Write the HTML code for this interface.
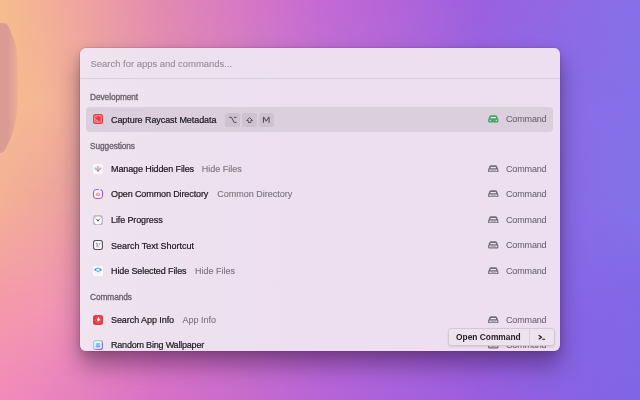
<!DOCTYPE html>
<html><head><meta charset="utf-8">
<style>
*{margin:0;padding:0;box-sizing:border-box}
html,body{width:640px;height:400px;overflow:hidden}
body{position:relative;font-family:"Liberation Sans",sans-serif;background:#c46ad4}
.bg{position:absolute;left:0;top:0;width:640px;height:400px}
.b400{background:linear-gradient(90deg,#f48bbb 0px,#e680c0 80px,#d870c8 160px,#c86ccc 240px,#b864d8 320px,#a862dc 400px,#9a5ee0 480px,#8a62e2 560px,#7e66e6 640px)}
.b300{background:linear-gradient(90deg,#f49aa8 0px,#f498b0 40px,#ea90b6 80px,#d878c4 160px,#b868d6 320px,#9862e0 480px,#8866e6 560px,#8268e6 640px);-webkit-mask-image:linear-gradient(180deg,#000 300px,transparent 400px)}
.b200{background:linear-gradient(90deg,#f4b196 0px,#f0a89a 40px,#e8a0a2 80px,#dc88b4 160px,#bc6cd4 320px,#9866e0 480px,#8a6ae6 560px,#8273e8 640px);-webkit-mask-image:linear-gradient(180deg,#000 200px,transparent 300px)}
.b100{background:linear-gradient(90deg,#f6bc90 0px,#f6b794 40px,#eeaa9c 80px,#e090b0 160px,#c070d0 320px,#9a64e0 480px,#8a6ce6 560px,#8470e8 640px);-webkit-mask-image:linear-gradient(180deg,#000 100px,transparent 200px)}
.b0{background:linear-gradient(90deg,#f6bc8c 0px,#f0a4a0 80px,#e38ab0 160px,#d878c4 240px,#c46ad4 320px,#b264d8 400px,#9a60e0 480px,#9068e4 560px,#8570e8 640px);-webkit-mask-image:linear-gradient(180deg,#000 0px,transparent 100px)}
.panel{will-change:transform;position:absolute;left:80px;top:48px;width:480px;height:302.5px;border-radius:6px;background:linear-gradient(90deg,#efe4ef 0px,#ede1ef 80px,#eddff0 200px,#eddff0 480px);
 box-shadow:0 14px 22px rgba(40,10,40,.42),0 2px 8px rgba(40,10,40,.15),0 0 0 0.5px rgba(120,80,140,.3);overflow:hidden}
.t{position:absolute;white-space:nowrap;line-height:12px}
.search{left:10.5px;top:9.6px;font-size:9.45px;color:#978c9a;-webkit-text-stroke:0.1px #978c9a}
.sep{position:absolute;left:0;top:30px;width:480px;height:1px;background:#dbcedc}
.hdr{left:10.1px;letter-spacing:-0.08px;font-size:8.3px;font-weight:400;color:#6a626e;-webkit-text-stroke:0.32px #6a626e}
.row{position:absolute;left:6px;width:467px;height:25px;border-radius:4px;line-height:25px;font-size:9px;white-space:nowrap}
.sel{background:#dbcedd}
.ico{position:absolute;left:7px;top:7px;width:10px;height:10px}
.ico svg{display:block}
.tw{position:absolute;left:25px;top:0.5px;display:flex}
.title{color:#1c181e;-webkit-text-stroke:0.2px #1c181e}
.sub{color:#7e7682;-webkit-text-stroke:0.14px #7e7682;margin-left:7.8px}
.cico{position:absolute;left:402px;top:8.2px;width:10.5px;height:7.5px}
.cico svg{display:block}
.cmd{position:absolute;left:420px;top:0px;letter-spacing:-0.15px;color:#6a626e;-webkit-text-stroke:0.05px #6a626e}
.key{position:absolute;top:6px;width:15px;height:13.5px;border-radius:2.5px;background:#cfc2d0}
.key svg{display:block}
.btn{position:absolute;left:368px;top:280px;width:107px;height:17.8px;border-radius:3.5px;background:#ede2ee;
 border:1px solid #d3c7d5;box-shadow:0 1px 2px rgba(80,40,90,.14)}
.btn .lbl{position:absolute;left:7px;top:0.9px;line-height:15px;font-size:8.4px;font-weight:700;color:#231e25}
.btn .div{position:absolute;left:79.5px;top:0;width:1px;height:15.8px;background:#dbcfdc}
</style></head><body>
<div class="bg b400"></div><div class="bg b300"></div><div class="bg b200"></div><div class="bg b100"></div><div class="bg b0"></div>
<svg style="position:absolute;left:0;top:0" width="40" height="170"><defs><linearGradient id="bl" x1="0" y1="0" x2="1" y2="0"><stop offset="0" stop-color="#da9992"/><stop offset=".45" stop-color="#dc9b92"/><stop offset=".7" stop-color="#e3a492"/><stop offset="1" stop-color="#ebb095"/></linearGradient></defs><path d="M0 23 L6 23.5 C8 25 9 27 9.6 29 C13 36 16 44 16.5 50 C17.5 62 18 80 17.8 100 C17.6 112 16 120 15 124 C13 133 10 140 7 146 C5 150 3 153 0 153 Z" fill="url(#bl)"/></svg>
<div class="panel">
  <div class="t search">Search for apps and commands...</div>
  <div class="sep"></div>
  <div class="t hdr" style="top:43.1px">Development</div>
  <div class="row sel" style="top:59.25px">
    <div class="ico"><svg width="10" height="10" viewBox="0 0 20 20"><rect width="20" height="20" rx="5" fill="#ee3a41"/><rect x="2.3" y="2.3" width="15.4" height="15.4" rx="3.6" fill="#f6989b"/><rect x="3.8" y="3.8" width="12.4" height="12.4" rx="2.6" fill="#f1646b"/><circle cx="10.6" cy="9.6" r="4.3" fill="#ec3543"/><path d="M6.2 10.8 A4.4 4.4 0 0 0 10.2 14.5" stroke="#fbd2c6" stroke-width="1.5" fill="none"/></svg></div>
    <div class="tw"><span class="title" style="letter-spacing:-0.07px">Capture Raycast Metadata</span></div>
    <div class="key" style="left:139px"><svg width="15" height="13.5" viewBox="0 0 15 13.5"><path d="M4.2 4.3 H6.4 L9.1 9.4 H11.4 M8.7 4.3 H11.4" stroke="#4a4450" stroke-width="0.95" fill="none"/></svg></div>
    <div class="key" style="left:156px"><svg width="15" height="13.5" viewBox="0 0 15 13.5"><path d="M7.6 4.5 L10.5 7.5 H8.9 V9.5 H6.3 V7.5 H4.7 Z" stroke="#4a4450" stroke-width="0.85" fill="none" stroke-linejoin="round"/></svg></div>
    <div class="key" style="left:173px"><svg width="15" height="13.5" viewBox="0 0 15 13.5"><path d="M4.4 9.8 V4.2 H4.9 L7.25 8.2 L9.6 4.2 H10.1 V9.8" stroke="#4a4450" stroke-width="1.0" fill="none" stroke-linejoin="round"/></svg></div>
    <div class="cico"><svg width="10.5" height="7.5" viewBox="0 0 21 15"><path d="M6 0.3 H15 Q17 0.3 18 2.2 L19.6 6.6 Q20.8 7.8 20.8 9.8 V12.8 Q20.8 14.9 18.8 14.9 H2.2 Q0.2 14.9 0.2 12.8 V9.8 Q0.2 7.8 1.4 6.6 L3 2.2 Q4 0.3 6 0.3 Z" fill="#49a56a"/><path d="M5.4 4.1 H15.6 L16.3 6.6 H4.7 Z" fill="#dcebe1"/><circle cx="4.4" cy="10.8" r="1.3" fill="#dcebe1"/><circle cx="16.6" cy="10.8" r="1.3" fill="#dcebe1"/><circle cx="10.5" cy="11.2" r="0.9" fill="#9ccfae"/></svg></div>
    <span class="cmd">Command</span>
  </div>
  <div class="t hdr" style="top:91.98px">Suggestions</div>
  <div class="row" style="top:108.6px">
    <div class="ico"><svg width="10" height="10" viewBox="0 0 20 20"><rect width="20" height="20" rx="5" fill="#fdf9fc"/><path d="M2 7 Q5.5 6.2 8.2 9.2 L7.9 13 Q3.8 12.2 2 7Z" fill="#86ccf2"/><path d="M18 7 Q14.5 6.2 11.8 9.2 L12.1 13 Q16.2 12.2 18 7Z" fill="#86ccf2"/><path d="M5.2 4 L7.8 7 M14.8 4 L12.2 7 M9 3.2 L9.4 5.4 M11 3.2 L10.6 5.4" stroke="#c4bac8" stroke-width="1.1" fill="none"/><path d="M7.8 5.4 Q10 3.8 12.2 5.4 L11.6 13.6 Q10 15.6 8.4 13.6Z" fill="#f6aa9e"/><path d="M8.2 12 Q10 11.2 11.8 12 L11.5 14.4 Q10 16 8.5 14.4Z" fill="#ef4452"/></svg></div>
    <div class="tw"><span class="title" style="letter-spacing:-0.11px">Manage Hidden Files</span><span class="sub">Hide Files</span></div>
    <div class="cico"><svg width="10.5" height="7.5" viewBox="0 0 21 15"><path d="M6 0.3 H15 Q17 0.3 18 2.2 L19.6 6.6 Q20.8 7.8 20.8 9.8 V12.8 Q20.8 14.9 18.8 14.9 H2.2 Q0.2 14.9 0.2 12.8 V9.8 Q0.2 7.8 1.4 6.6 L3 2.2 Q4 0.3 6 0.3 Z" fill="#736d77"/><path d="M5.4 4.1 H15.6 L16.3 6.6 H4.7 Z" fill="#ece1ed"/><rect x="2.2" y="8.7" width="16.6" height="4.2" rx="1.4" fill="#b3acb6"/><circle cx="4.4" cy="10.8" r="1.25" fill="#ece1ed"/><circle cx="16.6" cy="10.8" r="1.25" fill="#ece1ed"/></svg></div>
    <span class="cmd">Command</span>
  </div>
  <div class="row" style="top:133.6px">
    <div class="ico"><svg width="10" height="10" viewBox="0 0 20 20"><defs><linearGradient id="g1" x1="0" y1="1" x2="1" y2="0"><stop offset="0" stop-color="#f43c48"/><stop offset=".45" stop-color="#a04ad8"/><stop offset="1" stop-color="#7450e8"/></linearGradient></defs><rect x="1.1" y="1.3" width="17.8" height="17.4" rx="4.4" fill="#fffbfd" stroke="url(#g1)" stroke-width="2.0"/><path d="M11.5 1.3 H15" stroke="#f6f0f8" stroke-width="2.3"/><circle cx="16.4" cy="2.4" r="1.1" fill="#f08a6a"/><path d="M6.6 9 L8.3 11 L10 7.6 L11.7 11 L13.4 9 L12.9 13.2 H7.1 Z" fill="#fbe0e8" stroke="#e8607e" stroke-width="1.15" stroke-linejoin="round"/><circle cx="10" cy="7.2" r="0.9" fill="#e8607e"/></svg></div>
    <div class="tw"><span class="title" style="letter-spacing:-0.11px">Open Common Directory</span><span class="sub" style="margin-left:9px">Common Directory</span></div>
    <div class="cico"><svg width="10.5" height="7.5" viewBox="0 0 21 15"><path d="M6 0.3 H15 Q17 0.3 18 2.2 L19.6 6.6 Q20.8 7.8 20.8 9.8 V12.8 Q20.8 14.9 18.8 14.9 H2.2 Q0.2 14.9 0.2 12.8 V9.8 Q0.2 7.8 1.4 6.6 L3 2.2 Q4 0.3 6 0.3 Z" fill="#736d77"/><path d="M5.4 4.1 H15.6 L16.3 6.6 H4.7 Z" fill="#ece1ed"/><rect x="2.2" y="8.7" width="16.6" height="4.2" rx="1.4" fill="#b3acb6"/><circle cx="4.4" cy="10.8" r="1.25" fill="#ece1ed"/><circle cx="16.6" cy="10.8" r="1.25" fill="#ece1ed"/></svg></div>
    <span class="cmd">Command</span>
  </div>
  <div class="row" style="top:159.6px">
    <div class="ico"><svg width="10" height="10" viewBox="0 0 20 20"><defs><linearGradient id="g2" x1="0" y1="0" x2="0" y2="1"><stop offset="0" stop-color="#c6bfca"/><stop offset="1" stop-color="#b4b6c6"/></linearGradient></defs><rect width="20" height="20" rx="5" fill="url(#g2)"/><circle cx="10" cy="10.8" r="7.8" fill="#fcfafc"/><path d="M5.4 7.6 L10 10.8 L14.6 7.4" stroke="#5a545f" stroke-width="1.4" fill="none"/><circle cx="10" cy="11" r="1.7" fill="#3e3842"/></svg></div>
    <div class="tw"><span class="title" style="letter-spacing:-0.115px">Life Progress</span></div>
    <div class="cico"><svg width="10.5" height="7.5" viewBox="0 0 21 15"><path d="M6 0.3 H15 Q17 0.3 18 2.2 L19.6 6.6 Q20.8 7.8 20.8 9.8 V12.8 Q20.8 14.9 18.8 14.9 H2.2 Q0.2 14.9 0.2 12.8 V9.8 Q0.2 7.8 1.4 6.6 L3 2.2 Q4 0.3 6 0.3 Z" fill="#736d77"/><path d="M5.4 4.1 H15.6 L16.3 6.6 H4.7 Z" fill="#ece1ed"/><rect x="2.2" y="8.7" width="16.6" height="4.2" rx="1.4" fill="#b3acb6"/><circle cx="4.4" cy="10.8" r="1.25" fill="#ece1ed"/><circle cx="16.6" cy="10.8" r="1.25" fill="#ece1ed"/></svg></div>
    <span class="cmd">Command</span>
  </div>
  <div class="row" style="top:185.1px">
    <div class="ico"><svg width="10" height="10" viewBox="0 0 20 20"><rect x="1.1" y="1.1" width="17.8" height="17.8" rx="4.2" fill="#fdfbfd" stroke="#55505a" stroke-width="2.2"/><path d="M6.4 6.2 Q8.6 5.4 8.6 7.8 L8 14.6" stroke="#6a6272" stroke-width="1.7" fill="none"/><path d="M14.4 5.8 L10.2 15.4" stroke="#aea0c8" stroke-width="1.4" fill="none"/><path d="M14.4 5.8 L13 9" stroke="#76a2dc" stroke-width="1.5" fill="none"/></svg></div>
    <div class="tw"><span class="title" style="letter-spacing:-0.02px">Search Text Shortcut</span></div>
    <div class="cico"><svg width="10.5" height="7.5" viewBox="0 0 21 15"><path d="M6 0.3 H15 Q17 0.3 18 2.2 L19.6 6.6 Q20.8 7.8 20.8 9.8 V12.8 Q20.8 14.9 18.8 14.9 H2.2 Q0.2 14.9 0.2 12.8 V9.8 Q0.2 7.8 1.4 6.6 L3 2.2 Q4 0.3 6 0.3 Z" fill="#736d77"/><path d="M5.4 4.1 H15.6 L16.3 6.6 H4.7 Z" fill="#ece1ed"/><rect x="2.2" y="8.7" width="16.6" height="4.2" rx="1.4" fill="#b3acb6"/><circle cx="4.4" cy="10.8" r="1.25" fill="#ece1ed"/><circle cx="16.6" cy="10.8" r="1.25" fill="#ece1ed"/></svg></div>
    <span class="cmd">Command</span>
  </div>
  <div class="row" style="top:210.6px">
    <div class="ico"><svg width="10" height="10" viewBox="0 0 20 20"><rect width="20" height="20" rx="5" fill="#fefbfe"/><path d="M5.2 12 V15.6 Q10 17.6 14.8 15.6 V12" stroke="#f2d6e4" stroke-width="1" fill="none"/><path d="M3.4 7.3 Q3.8 3 10 3 Q16.2 3 16.6 7.3 Q16.3 10.2 13.2 10.6 Q12.2 12.8 10 12.8 Q7.8 12.8 6.8 10.6 Q3.7 10.2 3.4 7.3 Z" fill="#5ec2f2"/><ellipse cx="10" cy="7.5" rx="3.4" ry="1.9" fill="#e8f6fd"/><circle cx="4.3" cy="7.5" r="1.6" fill="#7448e0"/><circle cx="15.7" cy="7.5" r="1.6" fill="#7448e0"/></svg></div>
    <div class="tw"><span class="title" style="letter-spacing:-0.11px">Hide Selected Files</span><span class="sub" style="margin-left:8.6px">Hide Files</span></div>
    <div class="cico"><svg width="10.5" height="7.5" viewBox="0 0 21 15"><path d="M6 0.3 H15 Q17 0.3 18 2.2 L19.6 6.6 Q20.8 7.8 20.8 9.8 V12.8 Q20.8 14.9 18.8 14.9 H2.2 Q0.2 14.9 0.2 12.8 V9.8 Q0.2 7.8 1.4 6.6 L3 2.2 Q4 0.3 6 0.3 Z" fill="#736d77"/><path d="M5.4 4.1 H15.6 L16.3 6.6 H4.7 Z" fill="#ece1ed"/><rect x="2.2" y="8.7" width="16.6" height="4.2" rx="1.4" fill="#b3acb6"/><circle cx="4.4" cy="10.8" r="1.25" fill="#ece1ed"/><circle cx="16.6" cy="10.8" r="1.25" fill="#ece1ed"/></svg></div>
    <span class="cmd">Command</span>
  </div>
  <div class="t hdr" style="top:242.68px">Commands</div>
  <div class="row" style="top:259.5px">
    <div class="ico"><svg width="10" height="10" viewBox="0 0 20 20"><rect width="20" height="20" rx="5" fill="#ee3a41"/><path d="M11 3.6 L16 10 L9.8 16.6 L4 10.4 Z" fill="none" stroke="#f48a90" stroke-width="1"/><path d="M11 4 L13.6 9 L11 12.6 L8.4 9.6 Z" fill="#fff"/><circle cx="10.9" cy="10" r="2.4" fill="#fff"/></svg></div>
    <div class="tw"><span class="title" style="letter-spacing:-0.07px">Search App Info</span><span class="sub" style="margin-left:8.6px">App Info</span></div>
    <div class="cico"><svg width="10.5" height="7.5" viewBox="0 0 21 15"><path d="M6 0.3 H15 Q17 0.3 18 2.2 L19.6 6.6 Q20.8 7.8 20.8 9.8 V12.8 Q20.8 14.9 18.8 14.9 H2.2 Q0.2 14.9 0.2 12.8 V9.8 Q0.2 7.8 1.4 6.6 L3 2.2 Q4 0.3 6 0.3 Z" fill="#736d77"/><path d="M5.4 4.1 H15.6 L16.3 6.6 H4.7 Z" fill="#ece1ed"/><rect x="2.2" y="8.7" width="16.6" height="4.2" rx="1.4" fill="#b3acb6"/><circle cx="4.4" cy="10.8" r="1.25" fill="#ece1ed"/><circle cx="16.6" cy="10.8" r="1.25" fill="#ece1ed"/></svg></div>
    <span class="cmd">Command</span>
  </div>
  <div class="row" style="top:284.85px">
    <div class="ico"><svg width="10" height="10" viewBox="0 0 20 20"><defs><linearGradient id="g3" x1="0" y1="0" x2="1" y2="1"><stop offset="0" stop-color="#84d4f2"/><stop offset=".45" stop-color="#9cc0f2"/><stop offset=".7" stop-color="#9878ea"/><stop offset="1" stop-color="#8a64e8"/></linearGradient></defs><rect x="1.2" y="1.2" width="17.6" height="17.6" rx="4.5" fill="#f8f3fc" stroke="url(#g3)" stroke-width="2.4"/><circle cx="18.6" cy="8.2" r="1.2" fill="#6a48d8"/><rect x="5.4" y="6" width="9" height="8.4" rx="1.2" fill="#7ccaf0"/><rect x="5.4" y="12.6" width="9" height="1.8" fill="#9a7ae8"/><circle cx="9" cy="11.6" r="0.8" fill="#e0f4ff"/></svg></div>
    <div class="tw"><span class="title" style="letter-spacing:-0.2px">Random Bing Wallpaper</span></div>
    <div class="cico"><svg width="10.5" height="7.5" viewBox="0 0 21 15"><path d="M6 0.3 H15 Q17 0.3 18 2.2 L19.6 6.6 Q20.8 7.8 20.8 9.8 V12.8 Q20.8 14.9 18.8 14.9 H2.2 Q0.2 14.9 0.2 12.8 V9.8 Q0.2 7.8 1.4 6.6 L3 2.2 Q4 0.3 6 0.3 Z" fill="#736d77"/><path d="M5.4 4.1 H15.6 L16.3 6.6 H4.7 Z" fill="#ece1ed"/><rect x="2.2" y="8.7" width="16.6" height="4.2" rx="1.4" fill="#b3acb6"/><circle cx="4.4" cy="10.8" r="1.25" fill="#ece1ed"/><circle cx="16.6" cy="10.8" r="1.25" fill="#ece1ed"/></svg></div>
    <span class="cmd">Command</span>
  </div>
  <div class="btn"><span class="lbl">Open Command</span><div class="div"></div><svg style="position:absolute;left:89px;top:5.9px" width="9" height="6" viewBox="0 0 9 6"><path d="M1 0.6 L3.6 2.25 L1 3.9" stroke="#1e1a20" stroke-width="1.15" fill="none" stroke-linecap="round" stroke-linejoin="round"/><rect x="4.1" y="3.85" width="3.1" height="1.0" rx="0.3" fill="#1e1a20"/></svg></div>
</div>
</body></html>
